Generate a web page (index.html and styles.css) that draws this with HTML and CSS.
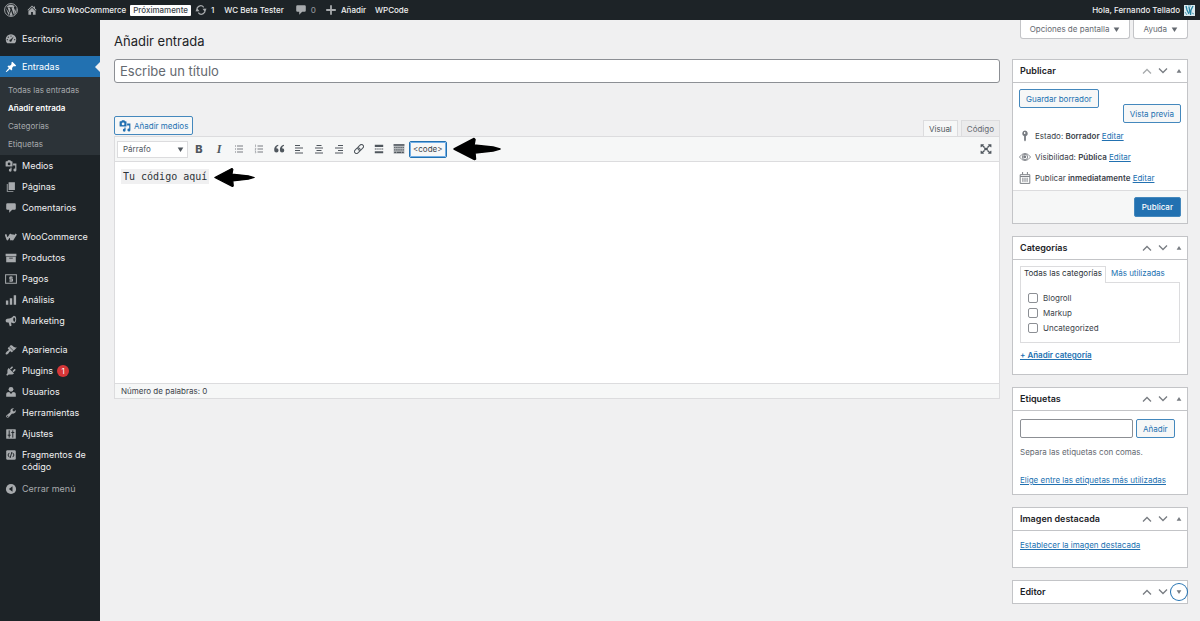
FILE: index.html
```html
<!DOCTYPE html>
<html lang="es">
<head>
<meta charset="utf-8">
<title>Añadir entrada</title>
<link rel="stylesheet" href="styles.css">
</head>
<body>
<svg class="defs" aria-hidden="true">
  <symbol id="wp" viewBox="0 0 20 20"><circle cx="10" cy="10" r="9.2" fill="none" stroke="currentColor" stroke-width="1.3"/><path d="M2.6 7l4 10.6 2.7-7.9L8.200 6.900H7V6h5.200v.9h-1.500l3.200 9.600 1.500-4.800c.5-1.700-.2-2.800-.8-3.900-.7-1.200-.5-2.700.8-3A7.700 7.700 0 0 0 3.400 6h3v.9H5.300l3 8.600M10.200 11l-2.300 6.800c1.500.4 3.100.4 4.600-.1zM17 6.500c.3 2-.1 3.200-.7 4.700L14 17.100a8.200 8.200 0 0 0 3-10.600z" fill="currentColor"/></symbol>
  <symbol id="home" viewBox="0 0 20 20"><path d="M16 8.500l1.500 1.600-1 1L10 4.600l-6.500 6.500-1-1L10 2.600l3 3V4h2v3.500zM10 6.100l6 5.900v6h-4.500v-4.500h-3V18H4v-6z" fill="currentColor"/></symbol>
  <symbol id="update" viewBox="0 0 20 20"><path d="M4 12A6.200 6.200 0 0 1 14.500 5.500M16 8A6.200 6.200 0 0 1 5.500 14.500" fill="none" stroke="currentColor" stroke-width="2"/><path d="M12.500 8h7L16 12.500zM.5 12h7L4 7.500z" fill="currentColor"/></symbol>
  <symbol id="comment" viewBox="0 0 20 20"><path d="M4 2h12q2 0 2 2v7q0 2-2 2h-4l-5 5v-5H4q-2 0-2-2V4q0-2 2-2z" fill="currentColor"/></symbol>
  <symbol id="plus" viewBox="0 0 20 20"><path d="M8.500 2h3v6.500H18v3h-6.500V18h-3v-6.500H2v-3h6.500z" fill="currentColor"/></symbol>
  <symbol id="dash" viewBox="0 0 20 20"><path fill-rule="evenodd" d="M3.800 17A8.800 8.800 0 1 1 16.200 17zM10 4.200a1 1 0 1 0 0 2 1 1 0 0 0 0-2zM5.500 6a1 1 0 1 0 0 2 1 1 0 0 0 0-2zM14.500 6L9.300 10.700a2 2 0 1 0 2 2zM3.800 10.200a1 1 0 1 0 0 2 1 1 0 0 0 0-2zM16.200 10.200a1 1 0 1 0 0 2 1 1 0 0 0 0-2z" fill="currentColor"/></symbol>
  <symbol id="pin" viewBox="0 0 20 20"><path d="M10.440 3.020l1.820-1.820 6.360 6.350-1.830 1.820c-1.050-.68-2.480-.57-3.410.36l-.75.750c-.92.930-1.040 2.350-.35 3.410l-1.830 1.820-2.410-2.410-2.800 2.790c-.42.420-3.380 2.710-3.800 2.290s1.860-3.390 2.280-3.810l2.790-2.790L4.100 9.360l1.830-1.820c1.050.69 2.480.57 3.400-.36l.75-.750c.93-.92 1.050-2.350.36-3.410z" fill="currentColor"/></symbol>
  <symbol id="media" viewBox="0 0 20 20"><path fill-rule="evenodd" d="M2 2h2l1-1.500h4L10 2h1.500q1 0 1 1v7q0 1-1 1H2q-1 0-1-1V3q0-1 1-1zm4.800 2.200a2.300 2.300 0 1 0 0 4.600 2.300 2.300 0 0 0 0-4.600zM13.500 6H19v10.500a2.500 2.500 0 1 1-2-2.400V9h-3.500zM9 12.500h2v4.300a2.300 2.300 0 1 1-2-2z" fill="currentColor"/></symbol>
  <symbol id="pages" viewBox="0 0 20 20"><path d="M6 15V2h10.500v13zM3 5h1.500v11.500H14V18H3z" fill="currentColor"/></symbol>
  <symbol id="woo" viewBox="0 0 20 20"><path d="M.8 5.500L4 14.200 8.800 6l1.200 8.200L14.500 6M11 5.500q-.5 6 1.800 8.700L18.600 5" fill="none" stroke="currentColor" stroke-width="3" stroke-linejoin="round"/></symbol>
  <symbol id="box" viewBox="0 0 20 20"><path fill-rule="evenodd" d="M1 3h18v4H1zM2 8h16v9H2zm5 1.500V11h6V9.500z" fill="currentColor"/></symbol>
  <symbol id="pay" viewBox="0 0 20 20"><path d="M1 3h18v14H1z" fill="none" stroke="currentColor" stroke-width="1.700"/><path d="M13 7H8v3h4.500v3.200H7M10 5v10" fill="none" stroke="currentColor" stroke-width="1.700"/></symbol>
  <symbol id="bars" viewBox="0 0 20 20"><path d="M1.500 11h4v7h-4zM8 7h4v11H8zM14.500 2h4v16h-4z" fill="currentColor"/></symbol>
  <symbol id="horn" viewBox="0 0 20 20"><path fill-rule="evenodd" d="M17 2.200c2.500 2 2.400 9.800-1 11.300-1.700.7-3-1-6-1.200l.8 4.200q.3 1.500-1 1.800l-1.800.4-2-6.200H4.500Q1.500 12.500 1 9.800.800 7 3.500 6.300 11 5.500 13.500 1.900q1.500-1.200 3.500.3zm-2 1.600c-1.900 2-1.700 6.200.4 8 2.300-1.200 2.400-6.500-.4-8z" fill="currentColor"/></symbol>
  <symbol id="brush" viewBox="0 0 20 20"><path d="M14.480 11.060L7.410 3.990l1.500-1.500c.5-.56 2.300-.47 3.510.32 1.210.8 1.430 1.280 2.910 2.100 1.180.640 2.450 1.260 4.450.85zm-.71.710L6.700 4.700 4.930 6.470c-.39.390-.39 1.020 0 1.410l1.060 1.060c.39.390.39 1.030 0 1.420-.6.600-1.430 1.110-2.210 1.690-.35.260-.7.530-1.010.84C1.430 14.230.4 16.080 1.400 17.070c.99 1 2.840-.03 4.180-1.360.31-.31.580-.66.850-1.020.57-.78 1.080-1.610 1.690-2.210.39-.39 1.020-.39 1.410 0l1.060 1.060c.39.390 1.020.39 1.410 0z" fill="currentColor"/></symbol>
  <symbol id="plug" viewBox="0 0 20 20"><path d="M13.110 4.360L9.870 7.600 8 5.730l3.240-3.240c.350-.34 1.050-.2 1.560.32.520.51.660 1.210.31 1.550zm-8 1.770l.91-1.120 9.010 9.010-1.190.84c-.71.710-2.630 1.160-3.820 1.160H6.140L4.900 17.260c-.59.590-1.540.59-2.120 0-.59-.58-.59-1.530 0-2.120l1.240-1.240v-3.880c0-1.130.4-3.190 1.090-3.890zm7.260 3.970l3.240-3.240c.340-.35 1.040-.21 1.550.31.520.51.660 1.210.31 1.550l-3.240 3.250z" fill="currentColor"/></symbol>
  <symbol id="user" viewBox="0 0 20 20"><circle cx="10" cy="5.500" r="4" fill="currentColor"/><path d="M2 18v-4q0-4 5-4l3 3.500 3-3.500q5 0 5 4v4z" fill="currentColor"/></symbol>
  <symbol id="wrench" viewBox="0 0 20 20"><path d="M16.680 9.770c-1.340 1.340-3.300 1.670-4.950.99l-5.410 6.520c-.99.990-2.590.99-3.580 0s-.99-2.590 0-3.570l6.520-5.420c-.68-1.650-.35-3.610.99-4.950 1.280-1.280 3.120-1.620 4.720-1.060l-2.890 2.890 2.820 2.820 2.860-2.870c.530 1.580.18 3.390-1.080 4.650zM3.810 16.210c.4.390 1.040.39 1.430 0 .4-.4.400-1.040 0-1.430-.39-.4-1.030-.4-1.430 0-.39.390-.39 1.030 0 1.430z" fill="currentColor"/></symbol>
  <symbol id="sliders" viewBox="0 0 20 20"><rect x="2" y="2" width="16" height="16" rx="1" fill="currentColor"/><path d="M7 4v12M13 4v12M4.500 12h5M10.500 7.500h5" stroke="#1d2327" stroke-width="1.600"/></symbol>
  <symbol id="snip" viewBox="0 0 20 20"><rect x="2" y="2" width="16" height="16" rx="2" fill="currentColor"/><path d="M7 6.500L5 10l2 3.500M11.500 5l-3 10M13 6.500l2 3.500-2 3.500" fill="none" stroke="#1d2327" stroke-width="1.600"/></symbol>
  <symbol id="collapse" viewBox="0 0 20 20"><circle cx="10" cy="10" r="8.500" fill="currentColor"/><path d="M12.500 5.500v9L6.500 10z" fill="#1d2327"/></symbol>
  <symbol id="ul" viewBox="0 0 20 20"><path d="M2 3h2v2H2zM2 9h2v2H2zM2 15h2v2H2zM6 3.200h12v1.600H6zM6 9.200h12v1.600H6zM6 15.200h12v1.600H6z" fill="currentColor"/></symbol>
  <symbol id="ol" viewBox="0 0 20 20"><path d="M3 1.500V6M2 2.500l1-.8M1.800 8.500h2v1.200l-2 1.800h2.300M1.800 14h2l-1 1.500 1 .7v1.500h-2" stroke="currentColor" fill="none"/><path d="M7 3.200h11v1.600H7zM7 9.200h11v1.600H7zM7 15.200h11v1.600H7z" fill="currentColor"/></symbol>
  <symbol id="quote" viewBox="0 0 20 20"><path d="M9 4.500Q5.500 6 5.500 8.600 9.300 8.500 9.300 12.200A3.600 3.600 0 0 1 2 12.200Q1.500 5 8.500 3zM18.500 4.500Q15 6 15 8.600q3.800-.1 3.800 3.600a3.600 3.600 0 0 1-7.300 0Q11 5 18 3z" fill="currentColor"/></symbol>
  <symbol id="al" viewBox="0 0 20 20"><path d="M2 2h10v2H2zM2 7h16v2H2zM2 12h10v2H2zM2 17h16v2H2z" fill="currentColor"/></symbol>
  <symbol id="ac" viewBox="0 0 20 20"><path d="M5 2h10v2H5zM2 7h16v2H2zM5 12h10v2H5zM2 17h16v2H2z" fill="currentColor"/></symbol>
  <symbol id="ar" viewBox="0 0 20 20"><path d="M8 2h10v2H8zM2 7h16v2H2zM8 12h10v2H8zM2 17h16v2H2z" fill="currentColor"/></symbol>
  <symbol id="link" viewBox="0 0 20 20"><g transform="rotate(-45 10 10)" fill="none" stroke="currentColor" stroke-width="2"><rect x="-1" y="6" width="12.500" height="8" rx="4"/><rect x="8.500" y="6" width="12.500" height="8" rx="4"/></g></symbol>
  <symbol id="more" viewBox="0 0 20 20"><path d="M3 3h14v3.500H3zM3 9.200h3v1.800H3zM7 9.200h2.500v1.800H7zM10.500 9.200H13v1.800h-2.500zM14 9.200h3v1.800h-3zM3 13.700h14v3.500H3z" fill="currentColor"/></symbol>
  <symbol id="keys" viewBox="0 0 20 20"><path d="M1 2h18v16H1z" fill="currentColor" opacity=".4"/><path d="M1 2h18v2.500H1z" fill="currentColor"/><path d="M2 7.500h17M2 11.300h17" stroke="currentColor" stroke-width="2" stroke-dasharray="2 1.500"/><path d="M2 14.500h3v2H2zM6 14.500h8v2H6zM15 14.500h3v2h-3z" fill="currentColor"/></symbol>
  <symbol id="full" viewBox="0 0 20 20"><path d="M1 2h6L5.300 3.700l3 3-1.600 1.600-3-3L2 7H1zM19 2h-6l1.700 1.700-3 3 1.600 1.600 3-3L18 7h1zM1 18h6l-1.700-1.700 3-3-1.600-1.600-3 3L2 13H1zM19 18h-6l1.700-1.700-3-3 1.600-1.600 3 3L18 13h1zM7 8h6v4H7z" fill="currentColor"/></symbol>
  <symbol id="key" viewBox="0 0 20 20"><path fill-rule="evenodd" d="M10 1a4.800 4.800 0 0 1 1.500 9.300V17L10 19l-1.500-2v-6.700A4.800 4.800 0 0 1 10 1zM8.500 3.500v3h2v-3z" fill="currentColor"/></symbol>
  <symbol id="eye" viewBox="0 0 20 20"><path d="M.7 10Q5 4 10 4t9.300 6Q15 16 10 16T.7 10z" fill="none" stroke="currentColor" stroke-width="1.400"/><circle cx="10" cy="10" r="4.500" fill="none" stroke="currentColor" stroke-width="1.400"/><circle cx="9.500" cy="9.500" r="2.500" fill="currentColor"/></symbol>
  <symbol id="cal" viewBox="0 0 20 20"><path d="M2 4.500h16V19H2zM2 7.500h16M6.500 9.500v7M10 9.500v7M13.500 9.500v7M6 0v4M14 0v4" fill="none" stroke="currentColor" stroke-width="1.600"/></symbol>
  <symbol id="up" viewBox="0 0 10 10"><path d="M1 7.500l4-4 4 4" fill="none" stroke="currentColor" stroke-width="1.300"/></symbol>
  <symbol id="down" viewBox="0 0 10 10"><path d="M1 2.500l4 4 4-4" fill="none" stroke="currentColor" stroke-width="1.300"/></symbol>
  <symbol id="tri-up" viewBox="0 0 10 10"><path d="M5 1.500L9 8H1z" fill="currentColor"/></symbol>
  <symbol id="tri-down" viewBox="0 0 10 10"><path d="M5 8.500L9 2H1z" fill="currentColor"/></symbol>
  <symbol id="arrow" viewBox="0 0 48 24"><path d="M1 12L21 1.500l1 1-1 5.500 19 2 7 2-7 2-18 2 .5 6-1 .5z" fill="#000" stroke="#000" stroke-width="1.500" stroke-linejoin="round"/></symbol>
</svg>

<header class="bar">
  <a class="bar-link" href="#" aria-label="WordPress"><svg class="i14"><use href="#wp"/></svg></a>
  <a class="bar-link site" href="#"><svg class="i12"><use href="#home"/></svg>Curso WooCommerce</a>
  <a class="soon" href="#">Próximamente</a>
  <a class="bar-link" href="#"><svg class="i12"><use href="#update"/></svg>1</a>
  <a class="bar-link tester" href="#">WC Beta Tester</a>
  <a class="bar-link dim" href="#"><svg class="i12"><use href="#comment"/></svg>0</a>
  <a class="bar-link add" href="#"><svg class="i12"><use href="#plus"/></svg>Añadir</a>
  <a class="bar-link" href="#">WPCode</a>
  <a class="bar-link account" href="#">Hola, Fernando Tellado
    <svg class="avatar" viewBox="0 0 11 11"><path d="M0 0h11v11H0z" fill="#dcebf0"/><path d="M2 1l1 4 2 4M5 2l1 6M9 1L7 5l-.5 5" stroke="#2584a4" stroke-width="1.300" fill="none"/><path d="M1 7l2 3M8 8l2 1M4 1h3" stroke="#57a5bd"/></svg></a>
</header>

<div class="layout">
  <nav class="menu">
    <a class="item first" href="#"><svg class="i12"><use href="#dash"/></svg>Escritorio</a>
    <a class="item current" href="#"><svg class="i12"><use href="#pin"/></svg>Entradas</a>
    <div class="sub">
      <a href="#">Todas las entradas</a>
      <a class="on" href="#">Añadir entrada</a>
      <a href="#">Categorías</a>
      <a href="#">Etiquetas</a>
    </div>
    <div class="group">
      <a class="item" href="#"><svg class="i12"><use href="#media"/></svg>Medios</a>
      <a class="item" href="#"><svg class="i12"><use href="#pages"/></svg>Páginas</a>
      <a class="item" href="#"><svg class="i12"><use href="#comment"/></svg>Comentarios</a>
    </div>
    <div class="group">
      <a class="item" href="#"><svg class="i12"><use href="#woo"/></svg>WooCommerce</a>
      <a class="item" href="#"><svg class="i12"><use href="#box"/></svg>Productos</a>
      <a class="item" href="#"><svg class="i12"><use href="#pay"/></svg>Pagos</a>
      <a class="item" href="#"><svg class="i12"><use href="#bars"/></svg>Análisis</a>
      <a class="item" href="#"><svg class="i12"><use href="#horn"/></svg>Marketing</a>
    </div>
    <div class="group">
      <a class="item" href="#"><svg class="i12"><use href="#brush"/></svg>Apariencia</a>
      <a class="item" href="#"><svg class="i12"><use href="#plug"/></svg>Plugins <span class="count">1</span></a>
      <a class="item" href="#"><svg class="i12"><use href="#user"/></svg>Usuarios</a>
      <a class="item" href="#"><svg class="i12"><use href="#wrench"/></svg>Herramientas</a>
      <a class="item" href="#"><svg class="i12"><use href="#sliders"/></svg>Ajustes</a>
      <a class="item tall" href="#"><svg class="i12"><use href="#snip"/></svg>Fragmentos de código</a>
      <button class="item collapse" type="button"><svg class="i12"><use href="#collapse"/></svg>Cerrar menú</button>
    </div>
  </nav>

  <main class="content">
    <div class="head">
      <h1>Añadir entrada</h1>
      <div class="meta">
        <button class="meta-tab" type="button">Opciones de pantalla <svg class="i7"><use href="#tri-down"/></svg></button>
        <button class="meta-tab" type="button">Ayuda <svg class="i7"><use href="#tri-down"/></svg></button>
      </div>
    </div>
    <div class="columns">
      <section class="primary">
        <input class="title" type="text" placeholder="Escribe un título" aria-label="Escribe un título">
        <div class="tools">
          <button class="btn media-btn" type="button"><svg class="i12"><use href="#media"/></svg>Añadir medios</button>
          <div class="modes">
            <button class="mode active" type="button">Visual</button>
            <button class="mode" type="button">Código</button>
          </div>
        </div>
        <div class="editor">
          <div class="toolbar">
            <button class="format" type="button">Párrafo <svg class="i7"><use href="#tri-down"/></svg></button>
            <button class="tool bold" type="button">B</button>
            <button class="tool italic" type="button">I</button>
            <button class="tool light" type="button" aria-label="Lista"><svg class="i10"><use href="#ul"/></svg></button>
            <button class="tool light" type="button" aria-label="Lista numerada"><svg class="i10"><use href="#ol"/></svg></button>
            <button class="tool" type="button" aria-label="Cita"><svg class="i12"><use href="#quote"/></svg></button>
            <button class="tool" type="button" aria-label="Izquierda"><svg class="i10"><use href="#al"/></svg></button>
            <button class="tool" type="button" aria-label="Centro"><svg class="i10"><use href="#ac"/></svg></button>
            <button class="tool" type="button" aria-label="Derecha"><svg class="i10"><use href="#ar"/></svg></button>
            <button class="tool" type="button" aria-label="Enlace"><svg class="i10"><use href="#link"/></svg></button>
            <button class="tool" type="button" aria-label="Leer más"><svg class="i12"><use href="#more"/></svg></button>
            <button class="tool" type="button" aria-label="Barra de herramientas"><svg class="i12"><use href="#keys"/></svg></button>
            <button class="code-btn" type="button">&lt;code&gt;</button>
            <svg class="arrow-lg"><use href="#arrow"/></svg>
            <button class="tool full" type="button" aria-label="Pantalla completa"><svg class="i12"><use href="#full"/></svg></button>
          </div>
          <div class="canvas">
            <code>Tu código aquí</code>
            <svg class="arrow-sm"><use href="#arrow"/></svg>
          </div>
          <div class="status">Número de palabras: 0</div>
        </div>
      </section>

      <aside class="side">
        <section class="panel">
          <div class="panel-head"><h2>Publicar</h2><button class="move faint" type="button" aria-label="Subir"><svg class="i10"><use href="#up"/></svg></button><button class="move" type="button" aria-label="Bajar"><svg class="i10"><use href="#down"/></svg></button><button class="move toggle" type="button" aria-label="Plegar"><svg class="i6"><use href="#tri-up"/></svg></button></div>
          <div class="publish">
            <button class="btn save" type="button">Guardar borrador</button>
            <button class="btn preview" type="button">Vista previa</button>
            <p class="fact"><svg class="i12"><use href="#key"/></svg><span>Estado: <b>Borrador</b> <a href="#">Editar</a></span></p>
            <p class="fact"><svg class="i12"><use href="#eye"/></svg><span>Visibilidad: <b>Pública</b> <a href="#">Editar</a></span></p>
            <p class="fact"><svg class="i12"><use href="#cal"/></svg><span>Publicar <b>inmediatamente</b> <a href="#">Editar</a></span></p>
          </div>
          <div class="panel-foot"><button class="btn primary-btn" type="button">Publicar</button></div>
        </section>

        <section class="panel">
          <div class="panel-head"><h2>Categorías</h2><button class="move" type="button" aria-label="Subir"><svg class="i10"><use href="#up"/></svg></button><button class="move" type="button" aria-label="Bajar"><svg class="i10"><use href="#down"/></svg></button><button class="move toggle" type="button" aria-label="Plegar"><svg class="i6"><use href="#tri-up"/></svg></button></div>
          <div class="cats">
            <div class="cat-tabs"><a class="cat-tab active" href="#">Todas las categorías</a><a class="cat-tab" href="#">Más utilizadas</a></div>
            <div class="cat-list">
              <label><input type="checkbox">Blogroll</label>
              <label><input type="checkbox">Markup</label>
              <label><input type="checkbox">Uncategorized</label>
            </div>
            <a class="add-cat" href="#">+ Añadir categoría</a>
          </div>
        </section>

        <section class="panel">
          <div class="panel-head"><h2>Etiquetas</h2><button class="move" type="button" aria-label="Subir"><svg class="i10"><use href="#up"/></svg></button><button class="move" type="button" aria-label="Bajar"><svg class="i10"><use href="#down"/></svg></button><button class="move toggle" type="button" aria-label="Plegar"><svg class="i6"><use href="#tri-up"/></svg></button></div>
          <div class="tags">
            <div class="tag-row"><input type="text" aria-label="Etiquetas"><button class="btn" type="button">Añadir</button></div>
            <p class="hint">Separa las etiquetas con comas.</p>
            <a href="#">Elige entre las etiquetas más utilizadas</a>
          </div>
        </section>

        <section class="panel">
          <div class="panel-head"><h2>Imagen destacada</h2><button class="move" type="button" aria-label="Subir"><svg class="i10"><use href="#up"/></svg></button><button class="move" type="button" aria-label="Bajar"><svg class="i10"><use href="#down"/></svg></button><button class="move toggle" type="button" aria-label="Plegar"><svg class="i6"><use href="#tri-up"/></svg></button></div>
          <div class="image"><a href="#">Establecer la imagen destacada</a></div>
        </section>

        <section class="panel closed">
          <div class="panel-head"><h2>Editor</h2><button class="move" type="button" aria-label="Subir"><svg class="i10"><use href="#up"/></svg></button><button class="move" type="button" aria-label="Bajar"><svg class="i10"><use href="#down"/></svg></button><button class="move toggle focus" type="button" aria-label="Desplegar"><svg class="i6"><use href="#tri-down"/></svg></button></div>
        </section>
      </aside>
    </div>
  </main>
</div>
</body>
</html>
```
FILE: styles.css
```css
* { box-sizing: border-box; }
body {
  margin: 0;
  min-height: 100vh;
  display: flex;
  flex-direction: column;
  background: #f0f0f1;
  color: #3c434a;
  font: 8px/12px Inter, "Liberation Sans", sans-serif;
}
button, input { font: inherit; color: inherit; margin: 0; }
button { padding: 0; border: 0; background: none; }
a { color: #2271b1; }
h1, h2, p { margin: 0; }
svg { flex: none; display: block; }
.defs { position: absolute; width: 0; height: 0; }
.i6 { width: 6px; height: 6px; }
.i7 { width: 7px; height: 7px; }
.i10 { width: 10px; height: 10px; }
.i12 { width: 12px; height: 12px; }
.i14 { width: 14px; height: 14px; }

/* Admin bar */
.bar {
  display: flex;
  align-items: center;
  height: 20px;
  padding: 0 5px 0 4px;
  background: #1d2327;
  font-weight: 500;
}
.bar-link {
  display: flex;
  align-items: center;
  gap: 4px;
  color: #f0f0f1;
  text-decoration: none;
  white-space: nowrap;
}
.bar-link svg { color: #a7aaad; }
.site { margin-left: 8px; }
.soon {
  margin: 0 4px;
  padding: 0 3px;
  border-radius: 1px;
  background: #fff;
  color: #3c434a;
  line-height: 11px;
  text-decoration: none;
}
.tester { margin: 0 11px 0 10px; }
.dim { color: #8c8f94; }
.add { margin: 0 9px; }
.account { margin-left: auto; }
.avatar { width: 11px; height: 11px; }

/* Admin menu */
.layout { display: flex; flex: 1; }
.menu {
  flex: none;
  width: 100px;
  background: #1d2327;
}
.item {
  position: relative;
  display: flex;
  align-items: center;
  gap: 5px;
  width: 100%;
  padding: 5px 8px 4px 5px;
  color: #f0f0f1;
  font-size: 9px;
  font-weight: 400;
  line-height: 12px;
  text-align: left;
  text-decoration: none;
}
.item svg { color: #a7aaad; }
.first { margin: 8px 0 7px; }
.current { background: #2271b1; color: #fff; }
.current svg { color: #fff; }
.current::after {
  content: "";
  position: absolute;
  right: 0;
  top: 6px;
  border: 5px solid transparent;
  border-right-color: #f0f0f1;
  border-left: 0;
}
.sub {
  display: flex;
  flex-direction: column;
  gap: 6px;
  padding: 7px 8px 5px;
  background: #2c3338;
}
.sub a { color: #a7aaad; text-decoration: none; }
.sub .on { color: #fff; font-weight: 600; }
.group { margin-bottom: 8px; }
.count {
  width: 12px;
  border-radius: 6px;
  background: #d63638;
  color: #fff;
  font-size: 8px;
  text-align: center;
}
.item .count { margin-left: -1px; }
.tall { align-items: flex-start; padding-bottom: 5px; }
.collapse { color: #a7aaad; }

/* Page */
.content { flex: 1; min-width: 0; padding: 0 12px 8px 14px; }
.head { display: flex; justify-content: space-between; height: 39px; }
h1 { padding-top: 11px; color: #1d2327; font-size: 13px; font-weight: 400; line-height: 20px; }
.meta { display: flex; align-items: flex-start; gap: 3px; }
.meta-tab {
  display: flex;
  align-items: center;
  gap: 4px;
  height: 19px;
  padding: 0 9px;
  border: 1px solid #c3c4c7;
  border-top: 0;
  border-radius: 0 0 3px 3px;
  background: #fff;
  color: #646970;
}
.columns { display: flex; gap: 12px; align-items: flex-start; }
.primary { flex: 1; min-width: 0; }
.title {
  display: block;
  width: 100%;
  height: 24px;
  margin-bottom: 33px;
  padding: 0 5px;
  border: 1px solid #8c8f94;
  border-radius: 3px;
  background: #fff;
  font-size: 13px;
}
.title::placeholder { color: #646970; opacity: 1; }
.tools { display: flex; justify-content: space-between; }
.btn {
  display: inline-flex;
  align-items: center;
  gap: 3px;
  height: 19px;
  padding: 0 6px;
  border: 1px solid #4488bd;
  border-radius: 2px;
  background: #f6f7f7;
  color: #2271b1;
  white-space: nowrap;
}
.media-btn { padding: 0 4px; }
.modes { display: flex; align-items: flex-end; gap: 3px; padding-top: 4px; }
.mode {
  height: 16px;
  padding: 0 5px;
  border: 1px solid #dcdcde;
  border-bottom: 0;
  background: #ebebec;
  color: #646970;
}
.mode.active { background: #f6f7f7; color: #50575e; }
.editor { border: 1px solid #dcdcde; background: #fff; }
.toolbar {
  display: flex;
  align-items: center;
  height: 25px;
  padding: 0 3px 0 2px;
  border-bottom: 1px solid #dcdcde;
  background: #f6f7f7;
}
.format {
  display: flex;
  align-items: center;
  justify-content: space-between;
  width: 71px;
  height: 17px;
  margin-right: 1px;
  padding: 0 3px 0 5px;
  border: 1px solid #dcdcde;
  background: #fff;
  color: #50575e;
}
.tool {
  display: flex;
  align-items: center;
  justify-content: center;
  width: 20px;
  height: 18px;
  color: #50575e;
}
.light { color: #787c82; }
.bold { font-size: 11px; font-weight: 800; }
.italic { font: italic bold 12px "Liberation Serif", serif; }
.code-btn {
  height: 17px;
  margin-right: 6px;
  padding: 0 3px;
  border: 1px solid #2271b1;
  border-radius: 2px;
  outline: 1px solid #72aee6;
  outline-offset: -2px;
  background: #f6f7f7;
}
.arrow-lg { width: 48px; height: 24px; }
.full { margin-left: auto; }
.canvas { display: flex; align-items: flex-start; gap: 5px; height: 221px; padding: 5px 6px; }
code {
  margin-top: 2px;
  padding: 0 2px;
  background: #f0f0f1;
  color: #2c3338;
  font: 10px/15px "DejaVu Sans Mono", monospace;
}
.arrow-sm { width: 41px; height: 21px; }
.status {
  padding: 1px 6px;
  border-top: 1px solid #dcdcde;
  background: #f6f7f7;
}

/* Side panels */
.side { display: flex; flex-direction: column; flex: none; gap: 12px; width: 176px; }
.panel { border: 1px solid #c3c4c7; background: #fff; }
.panel-head {
  display: flex;
  align-items: center;
  height: 23px;
  padding-left: 7px;
  border-bottom: 1px solid #c3c4c7;
}
.closed .panel-head { height: 22px; border-bottom: 0; }
h2 { flex: 1; color: #1d2327; font-size: 9px; font-weight: 600; line-height: 12px; }
.move {
  display: flex;
  align-items: center;
  justify-content: center;
  width: 16px;
  height: 16px;
  color: #787c82;
}
.faint { color: #a7aaad; }
.toggle { border-radius: 8px; }
.focus { box-shadow: 0 0 0 1px #2271b1; }
.publish { display: flex; flex-direction: column; padding: 6px 6px 6px; gap: 9px; }
.save { align-self: flex-start; }
.preview { align-self: flex-end; margin: -13px 0 -2px; }
.fact { display: flex; align-items: center; gap: 4px; }
.fact svg { color: #787c82; }
b { font-weight: 600; }
.panel-foot {
  display: flex;
  justify-content: flex-end;
  padding: 6px;
  border-top: 1px solid #dcdcde;
  background: #f6f7f7;
}
.primary-btn { height: 20px; padding: 0 7px; background: #2271b1; color: #fff; font-weight: 500; }
.cats { padding: 6px 7px 13px; }
.cat-tabs { display: flex; }
.cat-tab { padding: 1px 5px 2px; line-height: 13px; text-decoration: none; }
.cat-tab.active {
  margin-bottom: -1px;
  padding: 0 3px 2px;
  border: 1px solid #dcdcde;
  border-bottom: 0;
  background: #fff;
  color: #2c3338;
}
.cat-list {
  display: flex;
  flex-direction: column;
  gap: 3px;
  margin-bottom: 6px;
  padding: 9px 7px 8px;
  border: 1px solid #dcdcde;
}
label { display: flex; align-items: center; gap: 5px; }
input[type="checkbox"] {
  appearance: none;
  width: 10px;
  height: 10px;
  border: 1px solid #8c8f94;
  border-radius: 2px;
  background: #fff;
}
.add-cat { font-weight: 600; }
.tags { padding: 8px 7px 8px; }
.tag-row { display: flex; gap: 3px; margin-bottom: 8px; }
.tag-row input { width: 113px; height: 19px; padding: 0 4px; border: 1px solid #8c8f94; border-radius: 2px; }
.hint { margin-bottom: 16px; color: #646970; }
.image { padding: 8px 7px 16px; }
```
